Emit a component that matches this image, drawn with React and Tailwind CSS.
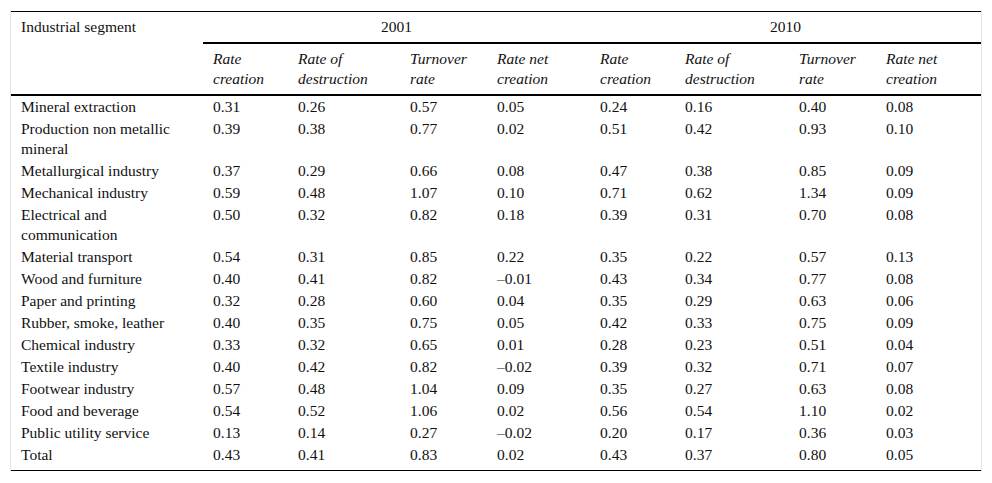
const rows = [
  ["Mineral extraction", "0.31", "0.26", "0.57", "0.05", "0.24", "0.16", "0.40", "0.08"],
  ["Production non metallic mineral", "0.39", "0.38", "0.77", "0.02", "0.51", "0.42", "0.93", "0.10"],
  ["Metallurgical industry", "0.37", "0.29", "0.66", "0.08", "0.47", "0.38", "0.85", "0.09"],
  ["Mechanical industry", "0.59", "0.48", "1.07", "0.10", "0.71", "0.62", "1.34", "0.09"],
  ["Electrical and communication", "0.50", "0.32", "0.82", "0.18", "0.39", "0.31", "0.70", "0.08"],
  ["Material transport", "0.54", "0.31", "0.85", "0.22", "0.35", "0.22", "0.57", "0.13"],
  ["Wood and furniture", "0.40", "0.41", "0.82", "–0.01", "0.43", "0.34", "0.77", "0.08"],
  ["Paper and printing", "0.32", "0.28", "0.60", "0.04", "0.35", "0.29", "0.63", "0.06"],
  ["Rubber, smoke, leather", "0.40", "0.35", "0.75", "0.05", "0.42", "0.33", "0.75", "0.09"],
  ["Chemical industry", "0.33", "0.32", "0.65", "0.01", "0.28", "0.23", "0.51", "0.04"],
  ["Textile industry", "0.40", "0.42", "0.82", "–0.02", "0.39", "0.32", "0.71", "0.07"],
  ["Footwear industry", "0.57", "0.48", "1.04", "0.09", "0.35", "0.27", "0.63", "0.08"],
  ["Food and beverage", "0.54", "0.52", "1.06", "0.02", "0.56", "0.54", "1.10", "0.02"],
  ["Public utility service", "0.13", "0.14", "0.27", "–0.02", "0.20", "0.17", "0.36", "0.03"],
  ["Total", "0.43", "0.41", "0.83", "0.02", "0.43", "0.37", "0.80", "0.05"],
];

const subHeads = ["Rate creation", "Rate of destruction", "Turnover rate", "Rate net creation"];
const widths = ["w-[192px]", "w-[85px]", "w-[112px]", "w-[87px]", "w-[103px]", "w-[85px]", "w-[114px]", "w-[87px]", "w-[105px]"];

export default function App() {
  return (
    <div className="min-h-[483px] bg-white font-['Liberation_Serif','Times_New_Roman',serif] text-[15.5px] leading-5 text-[#111]">
      <div className="ml-[10px] mt-[10px] w-[972px] border-x border-[#e4e4e4] pt-px">
        <table className="w-full table-fixed border-separate border-spacing-0 border-y border-black">
          <colgroup>
            {widths.map((w, i) => (
              <col key={i} className={w} />
            ))}
          </colgroup>
          <thead>
            <tr>
              <th rowSpan={2} className="border-b-2 border-black px-[10px] py-[5px] text-left align-top font-normal">
                Industrial segment
              </th>
              <th colSpan={4} className="border-b-2 border-black py-[5px] text-center font-normal">
                2001
              </th>
              <th colSpan={4} className="border-b-2 border-black py-[5px] text-center font-normal">
                2010
              </th>
            </tr>
            <tr>
              {[...subHeads, ...subHeads].map((h, i) => (
                <th key={i} className="border-b-2 border-black px-[10px] py-[5px] text-left align-top font-normal italic">
                  {h}
                </th>
              ))}
            </tr>
          </thead>
          <tbody>
            {rows.map((r, ri) => (
              <tr key={ri}>
                {r.map((c, ci) => (
                  <td
                    key={ci}
                    className={`px-[10px] align-top ${ri === rows.length - 1 ? "pt-px pb-[5px]" : "py-px"}`}
                  >
                    {c}
                  </td>
                ))}
              </tr>
            ))}
          </tbody>
        </table>
      </div>
    </div>
  );
}
